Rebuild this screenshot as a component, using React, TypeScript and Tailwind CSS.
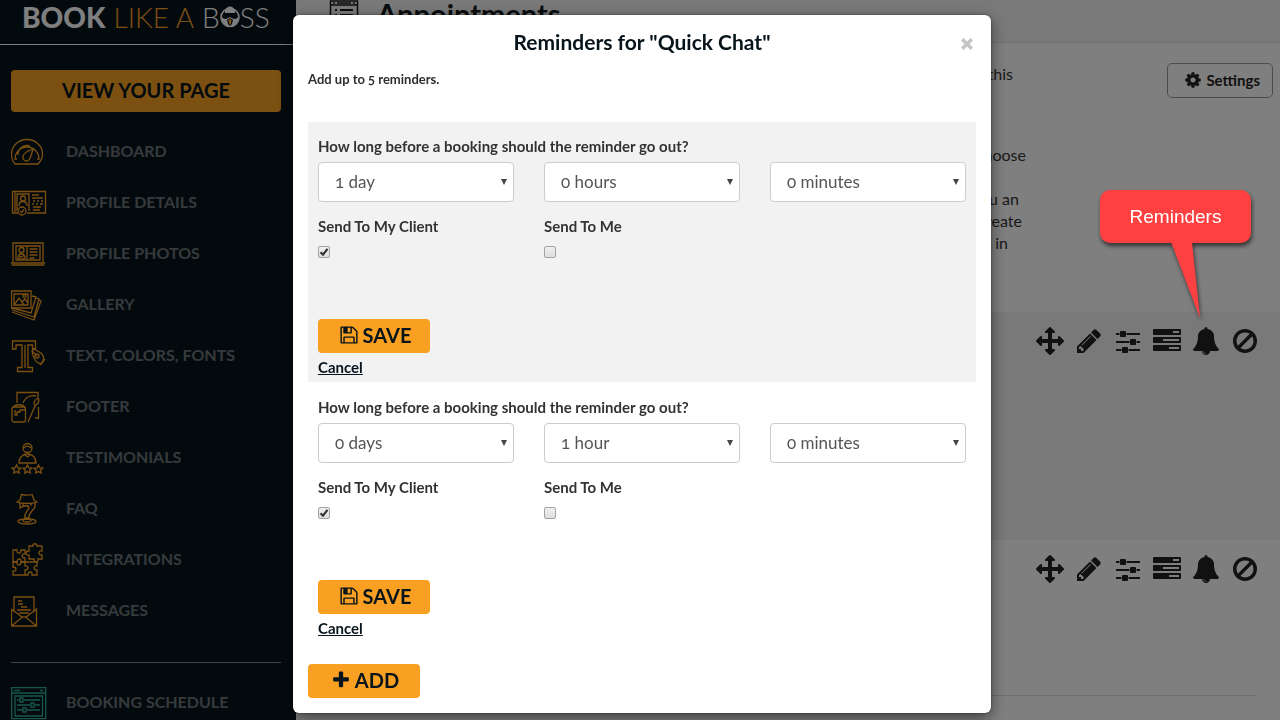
import { useState } from "react";
import type { ReactNode } from "react";

const faPaths = {
  move: "M1792 896q0 26-19 45l-256 256q-19 19-45 19t-45-19-19-45v-128h-384v384h128q26 0 45 19t19 45-19 45l-256 256q-19 19-45 19t-45-19l-256-256q-19-19-19-45t19-45 45-19h128v-384h-384v128q0 26-19 45t-45 19-45-19l-256-256q-19-19-19-45t19-45l256-256q19-19 45-19t45 19 19 45v128h384v-384h-128q-26 0-45-19t-19-45 19-45l256-256q19-19 45-19t45 19l256 256q19 19 19 45t-19 45-45 19h-128v384h384v-128q0-26 19-45t45-19 45 19l256 256q19 19 19 45z",
  pencil:
    "M491 1536l91-91-235-235-91 91v107h128v128h107zm523-928q0-22-22-22-10 0-17 7l-542 542q-7 7-7 17 0 22 22 22 10 0 17-7l542-542q7-7 7-17zm-54-192l416 416-832 832h-416v-416zm683 96q0 53-37 90l-166 166-416-416 166-165q36-38 90-38 53 0 91 38l235 234q37 39 37 91z",
  sliders:
    "M480 1408v128h-352v-128h352zm352-128q26 0 45 19t19 45v256q0 26-19 45t-45 19h-256q-26 0-45-19t-19-45v-256q0-26 19-45t45-19h256zm160-384v128h-864v-128h864zm-640-512v128h-224v-128h224zm1312 1024v128h-736v-128h736zm-960-1152q26 0 45 19t19 45v256q0 26-19 45t-45 19h-256q-26 0-45-19t-19-45v-256q0-26 19-45t45-19h256zm640 512q26 0 45 19t19 45v256q0 26-19 45t-45 19h-256q-26 0-45-19t-19-45v-256q0-26 19-45t45-19h256zm320 128v128h-224v-128h224zm0-512v128h-864v-128h864z",
  tasks:
    "M1024 1408h640v-128h-640v128zm-384-512h1024v-128h-1024v128zm640-512h384v-128h-384v128zm512 832v256q0 26-19 45t-45 19h-1664q-26 0-45-19t-19-45v-256q0-26 19-45t45-19h1664q26 0 45 19t19 45zm0-512v256q0 26-19 45t-45 19h-1664q-26 0-45-19t-19-45v-256q0-26 19-45t45-19h1664q26 0 45 19t19 45zm0-512v256q0 26-19 45t-45 19h-1664q-26 0-45-19t-19-45v-256q0-26 19-45t45-19h1664q26 0 45 19t19 45z",
  bell: "M912 1696q0-16-16-16-59 0-101.5-42.5t-42.5-101.5q0-16-16-16t-16 16q0 73 51.5 124.5t124.5 51.5q16 0 16-16zm816-288q0 52-38 90t-90 38h-448q0 106-75 181t-181 75-181-75-75-181h-448q-52 0-90-38t-38-90q50-42 91-88t85-119.5 74.5-158.5 50-206 19.5-260q0-152 117-282.5t307-158.5q-8-19-8-39 0-40 28-68t68-28 68 28 28 68q0 20-8 39 190 28 307 158.5t117 282.5q0 139 19.5 260t50 206 74.5 158.5 85 119.5 91 88z",
  ban: "M1440 893q0-161-87-295l-754 753q137 89 297 89 111 0 211.5-43.5t173.5-116.5 116-174.5 43-212.5zm-999 299l755-754q-135-91-300-91-148 0-273 73t-198 199-73 274q0 162 89 299zm1223-299q0 157-61 300t-163.5 246-245 164-298.5 61-298.5-61-245-164-163.5-246-61-300 61-299.5 163.5-245.5 245-164 298.5-61 298.5 61 245 164 163.5 245.5 61 299.5z",
  floppy:
    "M512 1536h768v-384h-768v384zm896 0h128v-896q0-14-10-38.5t-20-34.5l-281-281q-10-10-34-20t-39-10v416q0 40-28 68t-68 28h-576q-40 0-68-28t-28-68v-416h-128v1280h128v-416q0-40 28-68t68-28h832q40 0 68 28t28 68v416zm-384-928v-320q0-13-9.5-22.5t-22.5-9.5h-192q-13 0-22.5 9.5t-9.5 22.5v320q0 13 9.5 22.5t22.5 9.5h192q13 0 22.5-9.5t9.5-22.5zm640 32v928q0 40-28 68t-68 28h-1344q-40 0-68-28t-28-68v-1344q0-40 28-68t68-28h928q40 0 88 20t76 48l280 280q28 28 48 76t20 88z",
  plus: "M1600 736v192q0 40-28 68t-68 28h-416v416q0 40-28 68t-68 28h-192q-40 0-68-28t-28-68v-416h-416q-40 0-68-28t-28-68v-192q0-40 28-68t68-28h416v-416q0-40 28-68t68-28h192q40 0 68 28t28 68v416h416q40 0 68 28t28 68z",
  cog: "M1152 896q0-106-75-181t-181-75-181 75-75 181 75 181 181 75 181-75 75-181zm512-109v222q0 12-8 23t-20 13l-185 28q-19 54-39 91 35 50 107 138 10 12 10 25t-9 23q-27 37-99 108t-94 71q-12 0-26-9l-138-108q-44 23-91 38-16 136-29 186-7 28-36 28h-222q-14 0-24.5-8.5t-11.5-21.5l-28-184q-49-16-90-37l-141 107q-10 9-25 9-14 0-25-11-126-114-165-168-7-10-7-23 0-12 8-23 15-21 51-66.5t54-70.5q-27-50-41-99l-183-27q-13-2-21-12.5t-8-23.5v-222q0-12 8-23t19-13l186-28q14-46 39-92-40-57-107-138-10-12-10-24 0-10 9-23 26-36 98.5-107.5t94.5-71.5q13 0 26 10l138 107q44-23 91-38 16-136 29-186 7-28 36-28h222q14 0 24.5 8.5t11.5 21.5l28 184q49 16 90 37l142-107q9-9 24-9 13 0 25 10 129 119 165 170 7 8 7 22 0 12-8 23-15 21-51 66.5t-54 70.5q26 50 41 98l183 28q13 2 21 12.5t8 23.5z",
};

type IconName = keyof typeof faPaths;

function Icon({ name, className }: { name: IconName; className: string }) {
  return (
    <svg viewBox="0 0 1792 1792" fill="currentColor" aria-hidden="true" className={className}>
      <path d={faPaths[name]} />
    </svg>
  );
}

type NavItem = { label: string; art: ReactNode };

const navItems: NavItem[] = [
  {
    label: "DASHBOARD",
    art: (
      <>
        <path d="M4 31h23c3-3 4.500-7 4.500-10a15.500 14.500 0 0 0-31 0c0 3 .5 7 3.500 10z" />
        <path d="M6 26H4a12 12 0 1 1 24 0h-2M7 22a9 9 0 0 1 12-9" />
        <path d="M22 16c-6 2-10 5-10 8a3.500 3.500 0 0 0 7 1c1-2 2-5 3-9z" />
      </>
    ),
  },
  {
    label: "PROFILE DETAILS",
    art: (
      <>
        <path d="M7 29H1.500V7.500h33V29H16M4 8v20" />
        <path d="M6 27V10h12v17" />
        <circle cx="12" cy="14.500" r="2.500" />
        <path d="M8 22c0-6 8-6 8 0M21 11h7M21 14h11M22 17h2m2 0h2m2 0h2M21 20h2m2 0h2m2 0h3M22 23h8M22 26h7" />
        <circle cx="11" cy="27" r="4" />
        <path d="m9 27 1.500 1.500L13 25.500" />
      </>
    ),
  },
  {
    label: "PROFILE PHOTOS",
    art: (
      <>
        <path d="M2 28V8h30v20M.5 30h33M0 28h34" />
        <path d="M5 11h24v14H5zM16 11v14M18.500 14h8M18.500 17h8M18.500 20h8M18.500 23h5" />
        <circle cx="10.500" cy="15" r="2.500" />
        <path d="M7 24c0-7 7-7 7 0M8 21l5 3M8 24l5-4" />
      </>
    ),
  },
  {
    label: "GALLERY",
    art: (
      <>
        <path d="M.5 5h19.500v17H.500zM3 8h14v11H3z" />
        <path d="m3 19 5-7 5 7m-2-3 3-3 3 4" />
        <circle cx="13.500" cy="10" r="1.500" />
        <path d="m21 10 4 1-5 16L1 22m24-10 3 1-5 18L1 24m27-10 2 1-7 19L1 26" />
      </>
    ),
  },
  {
    label: "TEXT, COLORS, FONTS",
    art: (
      <>
        <path d="M1.500 4h23v8h-3V8h-4.500v22.500h4.500v4h-15v-4H11V8H5v4H1.500z" />
        <path d="M14 8v23M21 14l2-2 7 4c3 3 3 6 2 9l-2 2c-5-1-8-5-9-13z" />
        <circle cx="26" cy="19" r="2" />
        <path d="m26 19-5-5M29 28l5-6" />
      </>
    ),
  },
  {
    label: "FOOTER",
    art: (
      <>
        <path d="M6 15V4.500h21v5M27.500 19v11H24M12 15c3-7 9-8 13-7" />
        <rect x="1" y="19" width="13.500" height="15" rx="2" />
        <path d="M2 19c3-3 9-3 12 0M4 22v5h2v-3h3v-2h5" />
        <path d="M27 10c-4 2-5 6-3 8l3-3c1-2 1-4 0-5zM24 18l-7 16" />
      </>
    ),
  },
  {
    label: "TESTIMONIALS",
    art: (
      <>
        <circle cx="16.500" cy="9" r="4.500" />
        <path d="M13 9c2-3 5-2 7 0M8 24c0-12 17-12 17 0zM14 16l2.500 2 2.500-2" />
        <path d="m5.500 26 1.300 2.700 3 .4-2.200 2 .6 3-2.700-1.500L2.800 34l.5-2.900-2.200-2 3-.4zM16.500 26l1.300 2.700 3 .4-2.200 2 .6 3-2.700-1.500-2.700 1.500.5-2.900-2.200-2 3-.4zM27.500 26l1.300 2.700 3 .4-2.200 2 .6 3-2.700-1.500-2.700 1.500.5-2.900-2.200-2 3-.4z" />
      </>
    ),
  },
  {
    label: "FAQ",
    art: (
      <>
        <path d="M9 10 10.500 4.500c4 1 7 1 10.500 0L23 10l3 2c-5 2-15 2-20 0z" />
        <path d="M9 13v5c4-3 9-3 9 0-2 4-5 5-4 10h4c-1-5 4-7 6-11v-4M12 16v-3m8 3v-3" />
        <ellipse cx="16" cy="31.500" rx="9" ry="2.500" />
        <ellipse cx="16" cy="30.500" rx="4" ry="1.500" />
      </>
    ),
  },
  {
    label: "INTEGRATIONS",
    art: (
      <>
        <path d="M2 9h4c-1 4 4 4 4 0h4v4c-4-1-4 4 0 4v4h-4c1-4-4-4-4 0H2z" />
        <path d="M18 5h4c-1-3 4-3 4 0h5v5c-4-1-4 4 0 4v4h-4c1 4-4 4-4 0h-5v-4c-4 1-4-4 0-4z" />
        <path d="M2 21h4c-1 4 4 4 4 0h16v4c-4-1-4 4 0 4v5h-5c1-4-4-4-4 0H2v-4c4 1 4-4 0-4zM14 21v4c4-1 4 4 0 4v5" />
      </>
    ),
  },
  {
    label: "MESSAGES",
    art: (
      <>
        <path d="M3 20V5h20v15" />
        <path d="M.5 17v17h25V17l-3 2M.500 17 3 19l8 6h4l8-6M.500 34l11-9m3 0 11 9" />
        <path d="M7 9h4M7 12h5M10 15h6M6 18h14M8 21h10" />
      </>
    ),
  },
];

const toolbar: { name: IconName; label: string }[] = [
  { name: "move", label: "Move" },
  { name: "pencil", label: "Edit" },
  { name: "sliders", label: "Options" },
  { name: "tasks", label: "Questions" },
  { name: "bell", label: "Reminders" },
  { name: "ban", label: "Disable" },
];

function SidebarLink({ label, art, tone }: NavItem & { tone: string }) {
  return (
    <a href="#" className="flex h-[51px] items-center gap-[19px] text-[16px] font-bold text-[#6c7478]">
      <svg viewBox="0 0 36 36" fill="none" stroke="currentColor" strokeWidth="1.3" aria-hidden="true" className={`size-9 shrink-0 ${tone}`}>
        {art}
      </svg>
      {label}
    </a>
  );
}

function Logo() {
  return (
    <div className="flex h-[45px] items-center border-b border-white pb-[10px] pl-[22px] text-[28px] leading-[34px] whitespace-nowrap text-white">
      <span className="font-black">BOOK</span>
      <span className="ml-2 font-light text-[#f9a022]">LIKE A</span>
      <span className="ml-2 flex items-center font-light">
        B
        <svg viewBox="0 0 20 22" aria-hidden="true" className="h-[22px] w-5">
          <circle cx="10" cy="11.500" r="9" fill="none" stroke="#fff" strokeWidth="1.500" />
          <path d="M5 5c1-6 9-6 10 0v3H5z" fill="#fff" />
          <path d="M2 11c2 3 5 2 8 0 3 2 6 3 8 0 1 5-3 9.500-8 9.500S1 16 2 11z" fill="#fff" />
          <path d="M4 7h12v1.500H4z" fill="#07141c" />
          <path d="m10 12 3 2-1 4-2 2-2-2-1-4z" fill="#07141c" />
          <path d="m10 12.500 1.500 2-.5 3-1 1.500-1-1.500-.5-3z" fill="#f9a022" />
        </svg>
        SS
      </span>
    </div>
  );
}

function Sidebar() {
  return (
    <aside className="w-[296px] shrink-0 bg-[#07141c]">
      <Logo />
      <div className="pt-[25px] pr-[15px] pl-[11px]">
        <button type="button" className="h-[42px] w-full rounded bg-[#f9a022] pb-0.5 text-[20px] font-bold text-[#07141c]">
          VIEW YOUR PAGE
        </button>
        <nav className="pt-[13px]">
          {navItems.map((item) => (
            <SidebarLink key={item.label} {...item} tone="text-[#f9a022]" />
          ))}
          <hr className="mt-[27px] mb-[13px] border-[#7c868c]" />
          <SidebarLink
            label="BOOKING SCHEDULE"
            tone="text-[#2fae9c]"
            art={
              <>
                <path d="M.7 3.700h34v31H.700zM.7 9h34M3 6.500h6M29 6.500h3M4 12h27.500v20H4z" />
                <path d="M6 16h3m4 0h16M6 21h13m5 0h5M6 26h6m4 0h13" />
                <path d="M9 14h3v4H9zM20 19h3v4h-3zM12 24h3v4h-3z" />
              </>
            }
          />
        </nav>
      </div>
    </aside>
  );
}

function AppointmentTools() {
  return (
    <div className="flex justify-end gap-[11px] pt-[15px] pr-[21px] text-[#222]">
      {toolbar.map((tool) => (
        <button key={tool.name} type="button" aria-label={tool.label}>
          <Icon name={tool.name} className="block size-7" />
        </button>
      ))}
    </div>
  );
}

function Appointments() {
  return (
    <main className="min-w-0 grow bg-white text-[#333]">
      <header className="flex h-[43px] items-start gap-[18px] border-b border-[#e4e4e4] bg-[#f2f2f2] pl-[33px] text-[#14191d]">
        <svg viewBox="0 0 30 30" fill="none" stroke="currentColor" strokeWidth="1.500" aria-hidden="true" className="size-[30px]">
          <path d="M1.500 1h27v28h-27zM1.500 5h27M4 3h2m2 0h14m2 0h2" />
          <path d="M6 10h2m3 0h13M6 15h2m3 0h13M6 20h2m3 0h13M6 25h2m3 0h13" strokeWidth="2" />
        </svg>
        <h1 className="text-[29px] leading-[28px] font-bold">Appointments</h1>
      </header>
      <div className="flex h-[269px] items-start justify-end gap-[141px] pt-5 pr-[7px]">
        <div className="text-right text-[16px] leading-[22px]">
          <p className="pr-[13px]">this</p>
          <p className="pt-[59px]">choose</p>
          <p className="pt-[22px] pr-[7px]">you an</p>
          <p className="pr-1">create</p>
          <p className="pr-[18px]">in</p>
        </div>
        <button
          type="button"
          className="flex h-[35px] w-[106px] items-center justify-end gap-1 rounded-[5px] border border-[#999] pr-3 pb-px text-[15px] font-bold text-[#222]"
        >
          <Icon name="cog" className="size-[18px]" />
          Settings
        </button>
      </div>
      <section className="h-[228px] bg-[#f2f2f2]">
        <AppointmentTools />
      </section>
      <section>
        <AppointmentTools />
        <hr className="mt-28 mr-6 border-[#ddd]" />
      </section>
    </main>
  );
}

function Dropdown({ label, value }: { label: string; value: string }) {
  return (
    <div className="grid items-center">
      <select
        aria-label={label}
        defaultValue={value}
        className="col-start-1 row-start-1 h-10 w-full appearance-none rounded border border-[#ccc] bg-white px-4 text-[17px] text-[#555] oldstyle-nums"
      >
        <option>{value}</option>
      </select>
      <svg
        viewBox="0 0 8 6"
        aria-hidden="true"
        className="pointer-events-none col-start-1 row-start-1 mr-1.5 h-1.5 w-2 justify-self-end fill-[#444]"
      >
        <path d="M1 0h6L4 6z" />
      </svg>
    </div>
  );
}

function Tick({ label, initial }: { label: string; initial: boolean }) {
  const [checked, setChecked] = useState(initial);

  return (
    <label className="flex flex-col gap-[10px] font-bold">
      {label}
      <span className="grid size-3 place-items-center">
        <input
          type="checkbox"
          checked={checked}
          onChange={() => setChecked(!checked)}
          className="col-start-1 row-start-1 size-3 appearance-none rounded-[2px] border border-[#a3a3a3] bg-linear-to-b from-[#f0f0f0] to-[#dedede]"
        />
        {checked && (
          <svg viewBox="0 0 12 12" fill="none" stroke="#333" strokeWidth="2.200" aria-hidden="true" className="pointer-events-none col-start-1 row-start-1 size-3">
            <path d="M2.500 6.200 5 8.700 9.500 2.800" />
          </svg>
        )}
      </span>
    </label>
  );
}

function ActionButton({ icon, children }: { icon: IconName; children: ReactNode }) {
  return (
    <button
      type="button"
      className="flex h-[34px] w-28 items-center justify-center gap-1 rounded bg-[#f9a022] pb-0.5 pl-0.5 text-[20px] font-bold text-[#07141c]"
    >
      <Icon name={icon} className="size-5" />
      {children}
    </button>
  );
}

type Reminder = { days: string; hours: string; minutes: string };

const reminders: Reminder[] = [
  { days: "1 day", hours: "0 hours", minutes: "0 minutes" },
  { days: "0 days", hours: "1 hour", minutes: "0 minutes" },
];

function ReminderForm({ reminder, className }: { reminder: Reminder; className: string }) {
  return (
    <form className={`px-[10px] pt-[14px] pb-[5px] text-[15px] leading-5 text-[#333] ${className}`}>
      <p className="font-bold">How long before a booking should the reminder go out?</p>
      <div className="mt-1.5 grid grid-cols-3 gap-x-[30px] gap-y-[14px]">
        <Dropdown label="Days" value={reminder.days} />
        <Dropdown label="Hours" value={reminder.hours} />
        <Dropdown label="Minutes" value={reminder.minutes} />
        <Tick label="Send To My Client" initial={true} />
        <Tick label="Send To Me" initial={false} />
      </div>
      <div className="pt-[61px]">
        <ActionButton icon="floppy">SAVE</ActionButton>
      </div>
      <a href="#" className="mt-1 inline-block font-bold text-[#07141c] underline">
        Cancel
      </a>
    </form>
  );
}

function RemindersModal() {
  return (
    <div className="fixed inset-0 flex items-start justify-center bg-black/50 pt-[15px] pl-1">
      <div
        role="dialog"
        aria-labelledby="reminders-title"
        className="w-[698px] rounded-md bg-white p-[15px] text-[#2b2f32] shadow-[0_5px_15px_rgba(0,0,0,0.5),0_0_2px_rgba(0,0,0,0.6)]"
      >
        <div className="grid grid-cols-[1fr_auto_1fr] text-[#07141c]">
          <h2 id="reminders-title" className="col-start-2 text-[21px] leading-6 font-bold">
            Reminders for "Quick Chat"
          </h2>
          <button type="button" aria-label="Close" className="mr-[3px] justify-self-end pt-1 text-[#c4c4c4]">
            <svg viewBox="0 0 12 12" fill="none" stroke="currentColor" strokeWidth="3.400" aria-hidden="true" className="size-3">
              <path d="m1.200 1.200 9.600 9.600m0-9.600-9.600 9.600" />
            </svg>
          </button>
        </div>
        <p className="mt-[17px] mb-[35px] text-[13px] leading-4 font-bold oldstyle-nums">Add up to 5 reminders.</p>
        <div className="flex flex-col gap-px">
          <ReminderForm reminder={reminders[0]} className="bg-[#f2f2f2]" />
          <ReminderForm reminder={reminders[1]} className="bg-white" />
        </div>
        <div className="mt-[21px]">
          <ActionButton icon="plus">ADD</ActionButton>
        </div>
      </div>
    </div>
  );
}

function Callout() {
  return (
    <div className="fixed top-[190px] right-[29px] flex w-[151px] flex-col drop-shadow-[1px_3px_2px_rgba(0,0,0,0.6)]">
      <p className="rounded-[10px] bg-[#ff4040] py-3 text-center font-['Liberation_Sans',sans-serif] text-[19px] leading-[29px] text-white">
        Reminders
      </p>
      <svg viewBox="0 0 151 76" aria-hidden="true" className="-mt-px h-[76px] w-full fill-[#ff4040]">
        <path d="M71 0h21l8 76z" />
      </svg>
    </div>
  );
}

export default function App() {
  return (
    <div className="flex h-screen overflow-hidden bg-white font-['Lato',sans-serif]">
      <Sidebar />
      <Appointments />
      <RemindersModal />
      <Callout />
    </div>
  );
}
